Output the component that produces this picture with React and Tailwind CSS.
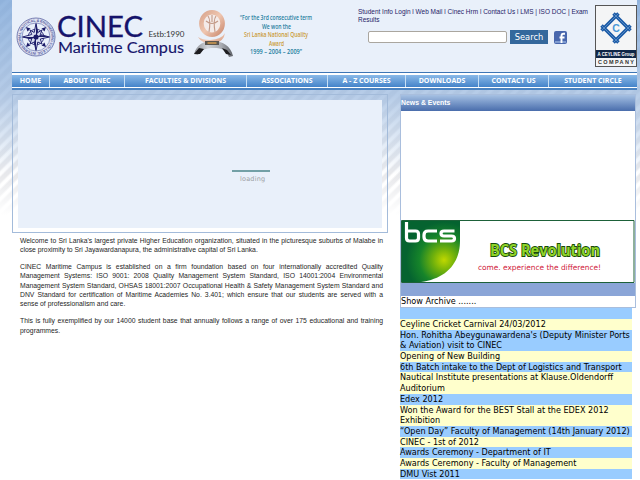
const nav = [
  ["HOME", "w-[38px]"],
  ["ABOUT CINEC", "w-[75px]"],
  ["FACULTIES & DIVISIONS", "w-[122px]"],
  ["ASSOCIATIONS", "w-[81px]"],
  ["A - Z COURSES", "w-[78px]"],
  ["DOWNLOADS", "w-[73px]"],
  ["CONTACT US", "w-[70px]"],
  ["STUDENT CIRCLE", "w-[88px]"],
];

const archive = [
  ["Ceyline Cricket Carnival 24/03/2012"],
  ["Hon. Rohitha Abeygunawardena's (Deputy Minister Ports", "& Aviation) visit to CINEC"],
  ["Opening of New Building"],
  ["6th Batch intake to the Dept of Logistics and Transport"],
  ["Nautical Institute presentations at Klause.Oldendorff", "Auditorium"],
  ["Edex 2012"],
  ["Won the Award for the BEST Stall at the EDEX 2012", "Exhibition"],
  ["“Open Day” Faculty of Management (14th January 2012)"],
  ["CINEC - 1st of 2012"],
  ["Awards Ceremony - Department of IT"],
  ["Awards Ceremony - Faculty of Management"],
  ["DMU Vist 2011"],
];

const paragraphs = [
  [
    "Welcome to Sri Lanka's largest private Higher Education organization, situated in the picturesque suburbs of Malabe in",
    "close proximity to Sri Jayawardanapura, the administrative capital of Sri Lanka.",
  ],
  [
    "CINEC Maritime Campus is established on a firm foundation based on four internationally accredited Quality",
    "Management Systems: ISO 9001: 2008 Quality Management System Standard, ISO 14001:2004 Environmental",
    "Management System Standard, OHSAS 18001:2007 Occupational Health & Safety Management System Standard and",
    "DNV Standard for certification of Maritime Academies No. 3.401; which ensure that our students are served with a",
    "sense of professionalism and care.",
  ],
  [
    "This is fully exemplified by our 14000 student base that annually follows a range of over 175 educational and training",
    "programmes.",
  ],
];

function Seal() {
  return (
    <svg viewBox="0 0 40 40" className="mt-[17px] h-[40px] w-[40px] shrink-0">
      <defs>
        <path id="sealRing" d="M20 35.3 A15.3 15.3 0 1 1 20.1 35.3" />
      </defs>
      <circle cx="20" cy="20" r="19" fill="#dfe4f2" stroke="#5860a0" strokeWidth=".8" />
      <circle cx="20" cy="20" r="14" fill="#e9f0fa" stroke="#6f77b0" strokeWidth=".7" />
      <text fontSize="3.700" fontWeight="bold" fill="#5a62a2" fontFamily="Liberation Sans, sans-serif">
        <textPath href="#sealRing" textLength="94">INTERNATIONAL NAUTICAL &amp; ENGINEERING COLLEGE</textPath>
      </text>
      <circle cx="20" cy="20" r="7.800" fill="none" stroke="#3b3b84" strokeWidth="1" />
      <path d="M20 6.500l1.800 9 4.200-2.500-1.700 4.500 9.200 2.500-9.200 2 1.700 5-4.200-2-1.800 8.500-1.800-8.500-4.200 2 1.700-5-9.200-2 9.200-2.500-1.700-4.500 4.200 2.500z" fill="#d9def0" stroke="#23236f" strokeWidth="1" />
      <path d="M20 6.500V20l1.800-4.500zM20 33.500V20l-1.800 4.500zM6.500 20H20l-4.500 2zM33.500 20H20l4.500-2z" fill="#1b1b68" />
      <path d="M10 10l4.500 1.500-3 3zM30 10l-4.500 1.500 3 3zM10 30l4.500-1.500-3-3zM30 30l-4.500-1.500 3-3z" fill="#1b1b68" />
      <circle cx="20" cy="20" r="2.600" fill="#1b1b68" />
    </svg>
  );
}

function Wordmark() {
  return (
    <svg viewBox="0 0 130 46" className="mt-[13px] ml-[2px] h-[46px] w-[130px] shrink-0 overflow-visible">
      <g fill="#15136b" fontFamily="Lato, sans-serif">
        <text x="-1" y="24.200" fontSize="28" textLength="86" lengthAdjust="spacingAndGlyphs" stroke="#15136b" strokeWidth=".3">CINEC</text>
        <text x="0" y="39.700" fontSize="15.500" textLength="126" lengthAdjust="spacingAndGlyphs" stroke="#15136b" strokeWidth=".15">Maritime Campus</text>
        <text x="90.500" y="24" fontSize="7.200" fill="#333" textLength="36" lengthAdjust="spacingAndGlyphs">Estb:1990</text>
      </g>
    </svg>
  );
}

function AwardTrophy() {
  return (
    <svg viewBox="0 0 42 52" className="mt-[8px] h-[52px] w-[42px] shrink-0">
      <defs>
        <linearGradient id="copper" x1="0" x2="1" y2="1">
          <stop stopColor="#d9a68f" /><stop offset=".5" stopColor="#efc6b0" /><stop offset="1" stopColor="#cc8c72" />
        </linearGradient>
        <linearGradient id="steel" x2="1">
          <stop stopColor="#8b8e94" /><stop offset=".35" stopColor="#d2d5da" /><stop offset=".7" stopColor="#a9acb2" /><stop offset="1" stopColor="#5d6066" />
        </linearGradient>
      </defs>
      <path d="M1 46C4 36 11 33 20 33s18 5 20 15l-4 1c-3-7-7-9-15-9-9 0-13 2-16 7z" fill="url(#steel)" />
      <path d="M1 46l5-6 5 1-4 5zM29 40l5 2 4 5-5-1z" fill="#1d1d20" />
      <path d="M5 29q4 3 12 3 12-1 15-7-1 9-12 11-11 0-15-7z" fill="url(#copper)" />
      <ellipse cx="19" cy="15.500" rx="10.600" ry="11.300" fill="#f4ebe9" stroke="url(#copper)" strokeWidth="4.600" />
      <path d="M15 8c3 4 2 10 1 16M23 8c-3 4-2 10-1 16M13 13q6 5 12 0M19 7v7" fill="none" stroke="#c39a88" strokeWidth="1.100" />
      <path d="M12 33h14v4H12z" fill="#5b5650" /><path d="M14.500 34h9v2h-9z" fill="#b58a4f" />
    </svg>
  );
}

function CeylineLogo() {
  return (
    <div className="flex h-[62px] w-[42px] shrink-0 flex-col border border-[#555] bg-[#f4f5f6]">
      <svg viewBox="0 0 40 44" className="h-[44px] w-[40px]">
        <g fill="none">
          <path d="M17.500 7.500l17 17M22.500 7.500l-17 17M5.500 19.500l17 17M34.500 19.500l-17 17" stroke="#1b5aa6" strokeWidth="3.500" />
          <path d="M17.500 7.500l17 17M22.500 7.500l-17 17M5.500 19.500l17 17M34.500 19.500l-17 17" stroke="#8fb8e2" strokeWidth=".5" />
        </g>
        <text x="20" y="25.800" textAnchor="middle" fontSize="10.500" fontWeight="bold" fill="#4a98d8" fontFamily="Liberation Sans, sans-serif">C</text>
      </svg>
      <svg viewBox="0 0 40 16" className="h-[16px] w-[40px]">
        <path d="M0 0h40v8H0z" fill="#102747" />
        <g fontFamily="Liberation Sans, sans-serif" fontWeight="bold">
          <text x="1.500" y="6" fontSize="5.500" fill="#fff" textLength="37" lengthAdjust="spacingAndGlyphs">A CEYLINE Group</text>
          <text x="2" y="14" fontSize="5.500" fill="#333" textLength="36">COMPANY</text>
        </g>
      </svg>
    </div>
  );
}

function BcsBanner() {
  return (
    <svg viewBox="0 0 234 63" className="block h-[63px] w-[234px]">
      <defs>
        <radialGradient id="leaf" gradientUnits="userSpaceOnUse" cx="43" cy="40" r="38">
          <stop stopColor="#c0d800" /><stop offset=".3" stopColor="#6fb00c" /><stop offset=".65" stopColor="#16842a" /><stop offset="1" stopColor="#056330" />
        </radialGradient>
      </defs>
      <path d="M.5.500h232.500v62H.5z" fill="#fff" stroke="#1d6139" />
      <path d="M1 1h58v20C59 45 43 59 20 62H1z" fill="url(#leaf)" />
      <g fill="none" stroke="#fff" strokeWidth="3.200" strokeLinejoin="round">
        <path d="M5.500 2v16q0 3 3 3h6q3 0 3-3v-4q0-3-3-3h-9" />
        <path d="M36 11h-9q-4 0-4 4v2q0 4 4 4h9" />
        <path d="M53.500 11H43q-3 0-3 2.500t3 2.500h7.500q3 0 3 2.500t-3 2.500H39" />
      </g>
      <text x="89" y="36" fontSize="15.500" fontWeight="bold" fontFamily="Open Sans, sans-serif" fill="#8fd428" stroke="#174a08" strokeWidth="1.800" paintOrder="stroke" textLength="110" lengthAdjust="spacingAndGlyphs">BCS Revolution</text>
      <text x="77" y="50" fontSize="7.500" fontFamily="DejaVu Sans, sans-serif" fill="#d0203a" textLength="123" lengthAdjust="spacingAndGlyphs">come. experience the difference!</text>
    </svg>
  );
}

function Header() {
  return (
    <header className="flex h-[72px] bg-[#e9f0fa] pl-[4px]">
      <Seal />
      <Wordmark />
      <div className="ml-[5px] shrink-0"><AwardTrophy /></div>
      <svg viewBox="0 0 80 46" className="mt-[12px] ml-[1px] h-[46px] w-[80px] shrink-0 overflow-visible">
        <g fontFamily="Open Sans, sans-serif" fontSize="6.500" fontWeight="600" fill="#27809f">
          <text x="4" y="8" textLength="72" lengthAdjust="spacingAndGlyphs">“For the 3rd consecutive term</text>
          <text x="26" y="16.600" textLength="29" lengthAdjust="spacingAndGlyphs">We won the</text>
          <text x="8" y="25.200" fill="#c99a35" textLength="64" lengthAdjust="spacingAndGlyphs">Sri Lanka National Quality</text>
          <text x="33" y="33.700" fill="#c99a35" textLength="15" lengthAdjust="spacingAndGlyphs">Award</text>
          <text x="14" y="42.300" textLength="52" lengthAdjust="spacingAndGlyphs">1999 – 2004 – 2009”</text>
        </g>
      </svg>
      <div className="ml-[42px] w-[237px] shrink-0 pt-[8px] font-['Liberation_Sans',sans-serif] text-[6.480px] leading-[8px] text-[#252267]">
        <div className="w-[230px] whitespace-nowrap [text-align-last:justify]">Student Info Login l Web Mail l Cinec Hrm l Contact Us l LMS | ISO DOC | Exam</div>
        <div>Results</div>
        <div className="mt-[6px] ml-[10px] flex items-center">
          <div className="h-[12px] w-[139px] rounded-[2px] border border-[#aaa69f] bg-white" />
          <div className="ml-[3px] h-[14px] w-[38px] bg-[#34689c] text-center font-['DejaVu_Sans',sans-serif] text-[8.300px] leading-[14px] text-white">Search</div>
          <svg viewBox="0 0 13 13" className="ml-[6px] h-[13px] w-[13px]">
            <rect width="13" height="13" rx="2" fill="#4867ad" />
            <path d="M1 10h11v2H1z" fill="#7f9bd0" />
            <path d="M11 2.700H9.500Q7.500 2.700 7.500 5v7M5.500 6.500h5" stroke="#fff" strokeWidth="1.900" fill="none" />
          </svg>
        </div>
      </div>
      <div className="mt-[5px] shrink-0"><CeylineLogo /></div>
    </header>
  );
}

export default function App() {
  return (
    <div className="h-[480px] w-[640px] overflow-hidden bg-white bg-[linear-gradient(to_bottom,rgba(130,170,218,.85)_0px,rgba(165,192,226,.8)_95px,rgba(205,221,240,.55)_145px,rgba(255,255,255,.3)_175px,#fff_215px),repeating-linear-gradient(135deg,#dedfe3_0px,#dedfe3_3px,#fff_5px,#fff_7px,#dedfe3_9px)]">
      <div className="ml-[12px] w-[625px]">
        <Header />
        <nav className="flex h-[18px] border-t border-b-2 border-t-[#3e76b5] border-b-[#4a82c0] bg-white pt-[2px] pb-px font-['Open_Sans',sans-serif] text-[7px] font-bold text-white">
          {nav.map(([label, width]) => (
            <div key={label} className={`${width} flex shrink-0 items-center justify-center border-r border-[#c7dff5] bg-linear-to-b from-[#8ab9e8] to-[#4483c9] whitespace-nowrap last:border-r-0`}>
              {label}
            </div>
          ))}
        </nav>
        <div className="flex items-start">
          <main className="mt-[4px] w-[376px] shrink-0">
            <div className="h-[139px] border border-[#a3bbda] p-[5px] pb-[4px]">
              <div className="h-full bg-[#e9f0fa] pt-[70px] pl-[214px]">
                <div className="h-[1.500px] w-[38px] bg-[#73a0a6]" />
                <div className="mt-[3px] ml-[8px] font-['DejaVu_Sans',sans-serif] text-[6.500px] leading-[8px] tracking-[.2px] text-[#9d9fa4]">loading</div>
              </div>
            </div>
            <div className="mt-[2.500px] ml-[8px] w-[363px] font-['Liberation_Sans',sans-serif] text-[6.820px] leading-[9.400px] text-[#252525]">
              {paragraphs.map((lines) => (
                <p key={lines[0]} className="mb-[7.500px]">
                  {lines.map((line, i) => (
                    <span key={line} className={i < lines.length - 1 ? "block whitespace-nowrap [text-align-last:justify]" : "block whitespace-nowrap"}>{line}</span>
                  ))}
                </p>
              ))}
            </div>
          </main>
          <aside className="mt-[4px] ml-[12px] w-[236px] shrink-0 font-['DejaVu_Sans',sans-serif] text-[8.110px] text-black">
            <div className="h-[214px] border border-[#a9bedd] bg-white">
              <div className="h-[16px] bg-linear-to-b from-[#a6c1e3] to-[#4a6dac] font-['Liberation_Sans',sans-serif] text-[6.900px] leading-[16px] font-bold text-white">News &amp; Events</div>
              <div className="h-[109px]" />
              <BcsBanner />
              <div className="h-[13px] bg-[#8aa5d7]" />
              <div className="leading-[11px]">Show Archive .......</div>
            </div>
            <div className="h-[11px] w-[232px] bg-[#99ccff]" />
            {archive.map((lines, i) => (
              <div key={lines[0]} className={`${i % 2 ? "bg-[#99ccff]" : "bg-[#ffffcc]"} w-[232px] leading-[10.680px] whitespace-nowrap`}>
                {lines.map((line) => <div key={line}>{line}</div>)}
              </div>
            ))}
          </aside>
        </div>
      </div>
    </div>
  );
}
